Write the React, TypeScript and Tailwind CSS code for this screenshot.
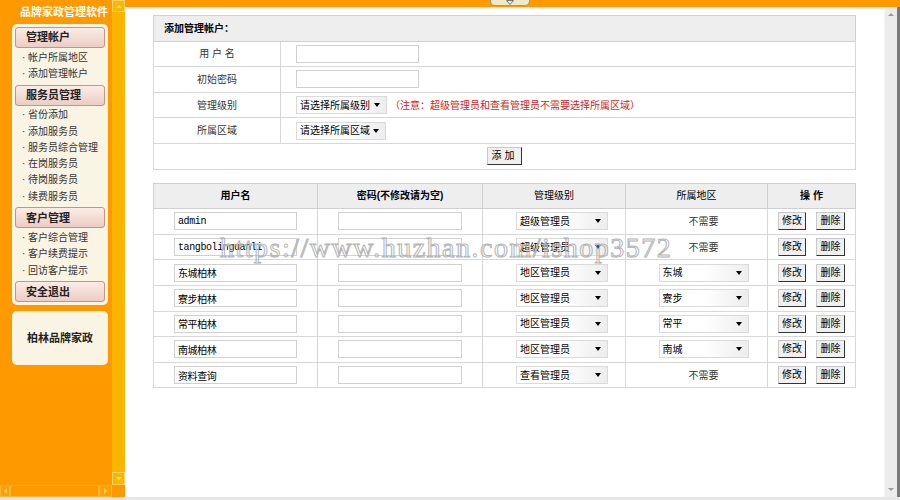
import React from 'react';

type Account = {
  name: string;
  level: string;
  area: string | null;
};

const accounts: Account[] = [
  { name: 'admin', level: '超级管理员', area: null },
  { name: 'tangbolinguanli', level: '超级管理员', area: null },
  { name: '东城柏林', level: '地区管理员', area: '东城' },
  { name: '寮步柏林', level: '地区管理员', area: '寮步' },
  { name: '常平柏林', level: '地区管理员', area: '常平' },
  { name: '南城柏林', level: '地区管理员', area: '南城' },
  { name: '资料查询', level: '查看管理员', area: null },
];

const menu = [
  { title: '管理帐户', items: ['帐户所属地区', '添加管理帐户'] },
  { title: '服务员管理', items: ['省份添加', '添加服务员', '服务员综合管理', '在岗服务员', '待岗服务员', '续费服务员'] },
  { title: '客户管理', items: ['客户综合管理', '客户续费提示', '回访客户提示'] },
];

// old style select box, drawn by hand so the arrow looks like the screenshot
const FakeSelect = ({ label, className }: { label: string; className: string }) => (
  <span
    className={`inline-flex h-[18px] items-center justify-between border border-[#dadada] bg-linear-to-r from-white via-white to-[#ededed] pl-[3px] pr-[6px] text-[10px] text-black ${className}`}
  >
    <span>{label}</span>
    <span className="h-0 w-0 border-x-[3.5px] border-t-[4px] border-x-transparent border-t-black" />
  </span>
);

const OldButton = ({ children, className }: { children: React.ReactNode; className: string }) => (
  <button
    type="button"
    className={`h-[18px] border border-[#c8c8c8] border-r-[#333] border-b-[#333] bg-[#f0f0f0] text-[10px] leading-none text-black ${className}`}
  >
    {children}
  </button>
);

const Sidebar = () => (
  <div className="flex w-[125px] flex-col">
    <div className="flex flex-1">
      <div className="flex w-[112px] flex-col bg-[#ff9900]">
        <div className="flex h-[24px] items-center pl-[20px] text-[11px] leading-none font-bold whitespace-nowrap text-white">
          品牌家政管理软件
        </div>

        <div className="ml-[12px] w-[96px] rounded-[5px] bg-[#faf4e4] px-[3px] pt-[3px] pb-[3px]">
          {menu.map((group, gi) => (
            <div key={group.title} className={gi === 0 ? '' : 'mt-[3px]'}>
              <div className="flex h-[21px] items-center rounded-[3px] border border-[#c4938a] bg-linear-to-b from-[#fbece6] to-[#ebcdc4] pl-[10px] text-[11px] font-bold text-[#222]">
                {group.title}
              </div>
              <div className="pt-[1px]">
                {group.items.map((item) => (
                  <div key={item} className="flex h-[16.3px] items-center pl-[7px] text-[10px] text-[#333]">
                    <span className="w-[6px]">·</span>
                    {item}
                  </div>
                ))}
              </div>
            </div>
          ))}
          <div className="mt-[3px] flex h-[21px] items-center rounded-[3px] border border-[#c4938a] bg-linear-to-b from-[#fbece6] to-[#ebcdc4] pl-[10px] text-[11px] font-bold text-[#222]">
            安全退出
          </div>
        </div>

        <div className="mt-[6px] ml-[12px] flex h-[54px] w-[96px] items-center justify-center rounded-[5px] bg-[#faf4e4] text-[11px] font-bold text-[#222]">
          柏林品牌家政
        </div>
      </div>

      {/* sidebar scrollbar */}
      <div className="flex w-[13px] flex-col justify-between bg-[#fbb400]">
        <div className="flex h-[12px] items-center justify-center border border-[#ffd46a] bg-[#fcb600]">
          <span className="h-0 w-0 border-x-[3px] border-b-[3px] border-x-transparent border-b-[#ffe08a]" />
        </div>
        <div className="flex h-[13px] items-center justify-center border border-[#ffd46a] bg-[#fcb600]">
          <span className="h-0 w-0 border-x-[3px] border-t-[3px] border-x-transparent border-t-[#ffe08a]" />
        </div>
      </div>
    </div>

    <div className="flex h-[12px]">
      <div className="flex w-[112px] bg-[#ff9900]">
        <div className="flex w-[10px] items-center justify-center border border-[#ffb733] bg-[#ffa200]">
          <span className="h-0 w-0 border-y-[3px] border-r-[3px] border-y-transparent border-r-[#ffd27a]" />
        </div>
        <div className="flex-1 border border-[#ffb733]" />
        <div className="flex w-[13px] items-center justify-center border border-[#ffb733] bg-[#ffa200]">
          <span className="h-0 w-0 border-y-[3px] border-l-[3px] border-y-transparent border-l-[#ffd27a]" />
        </div>
      </div>
      <div className="w-[13px] bg-[#ff9900]" />
    </div>
  </div>
);

const AddForm = () => (
  <table className="w-full border-collapse border border-[#d0d0d0] text-[10px] text-[#333]">
    <tbody>
      <tr className="h-[25.6px] bg-[#eeeeee]">
        <td colSpan={2} className="border border-[#d0d0d0] pl-[10px] font-bold text-black">
          添加管理帐户：
        </td>
      </tr>
      <tr className="h-[25.6px]">
        <td className="w-[127px] border border-[#d8d8d8] text-center whitespace-pre">用 户 名</td>
        <td className="border border-[#d8d8d8] pl-[15px]">
          <input className="block h-[18px] w-[123px] border border-[#d0d0d0] bg-white" />
        </td>
      </tr>
      <tr className="h-[25.6px]">
        <td className="border border-[#d8d8d8] text-center">初始密码</td>
        <td className="border border-[#d8d8d8] pl-[15px]">
          <input className="block h-[18px] w-[123px] border border-[#d0d0d0] bg-white" />
        </td>
      </tr>
      <tr className="h-[25.6px]">
        <td className="border border-[#d8d8d8] text-center">管理级别</td>
        <td className="border border-[#d8d8d8] pl-[15px]">
          <div className="flex items-center">
            <FakeSelect label="请选择所属级别" className="w-[91px]" />
            <span className="ml-[3px] text-[#cc1f1f]">（注意：超级管理员和查看管理员不需要选择所属区域）</span>
          </div>
        </td>
      </tr>
      <tr className="h-[25.6px]">
        <td className="border border-[#d8d8d8] text-center">所属区域</td>
        <td className="border border-[#d8d8d8] pl-[15px]">
          <FakeSelect label="请选择所属区域" className="w-[90px]" />
        </td>
      </tr>
      <tr className="h-[25.6px]">
        <td colSpan={2} className="border border-[#d8d8d8] text-center">
          <OldButton className="w-[35px] tracking-[3px]">添加</OldButton>
        </td>
      </tr>
    </tbody>
  </table>
);

const AccountTable = () => (
  <table className="mt-[13px] w-full table-fixed border-collapse border border-[#d0d0d0] text-[10px] text-[#333]">
    <colgroup>
      <col className="w-[164px]" />
      <col className="w-[165px]" />
      <col className="w-[143px]" />
      <col className="w-[142px]" />
      <col />
    </colgroup>
    <thead>
      <tr className="h-[25.6px] bg-[#eeeeee] text-black">
        <th className="border border-[#d0d0d0] font-bold">用户名</th>
        <th className="border border-[#d0d0d0] font-bold">密码(不修改请为空)</th>
        <th className="border border-[#d0d0d0] font-normal">管理级别</th>
        <th className="border border-[#d0d0d0] font-normal">所属地区</th>
        <th className="border border-[#d0d0d0] font-bold whitespace-pre">操 作</th>
      </tr>
    </thead>
    <tbody>
      {accounts.map((a) => (
        <tr key={a.name} className="h-[25.6px]">
          <td className="border border-[#d8d8d8]">
            <input
              readOnly
              value={a.name}
              className="mx-auto block h-[18px] w-[123px] border border-[#d0d0d0] bg-white pl-[3px] font-['Liberation_Mono','Noto_Sans_CJK_SC',monospace] text-[10px] tracking-[-0.4px] text-black"
            />
          </td>
          <td className="border border-[#d8d8d8]">
            <input className="mx-auto block h-[18px] w-[124px] border border-[#d0d0d0] bg-white" />
          </td>
          <td className="border border-[#d8d8d8] pl-[33px]">
            <FakeSelect label={a.level} className="w-[92px]" />
          </td>
          <td className="border border-[#d8d8d8] pl-[14px] text-center">
            {a.area ? <FakeSelect label={a.area} className="w-[90px]" /> : <span>不需要</span>}
          </td>
          <td className="border border-[#d8d8d8]">
            <div className="flex items-center justify-center gap-[10px]">
              <OldButton className="w-[28px]">修改</OldButton>
              <OldButton className="w-[29px]">删除</OldButton>
            </div>
          </td>
        </tr>
      ))}
    </tbody>
  </table>
);

export default function App() {
  return (
    <div className="relative flex h-[500px] w-[900px] flex-col overflow-hidden bg-white font-['Liberation_Sans','Noto_Sans_CJK_SC',sans-serif]">
      <div className="flex h-[497px]">
        <Sidebar />

        <div className="flex flex-1 flex-col">
          <div className="relative h-[7px] bg-[#ff9900]">
            <div className="absolute top-0 left-[365px] flex h-[6px] w-[40px] items-center justify-center rounded-b-[5px] border border-t-0 border-[#a09a78] bg-[#efe8c9]">
              <svg width="8" height="5" viewBox="0 0 8 5">
                <path d="M0.5 0.5 L7.5 0.5 L4 4.5 Z" fill="none" stroke="#777" strokeWidth="1" />
              </svg>
            </div>
          </div>

          <div className="flex flex-1">
            <div className="flex-1">
              <div className="h-[3px] bg-linear-to-b from-[#e4e4e4] to-white" />
              <div className="px-[28px] pt-[5px]">
                <AddForm />
                <AccountTable />
              </div>
            </div>

            {/* page scrollbar */}
            <div className="flex w-[13px] flex-col justify-between border-l border-[#f6f6f6] bg-[#ececec] py-[6px]">
              <span className="mx-auto h-0 w-0 border-x-[3px] border-b-[3px] border-x-transparent border-b-[#9a9a9a]" />
              <span className="mx-auto h-0 w-0 border-x-[3px] border-t-[3px] border-x-transparent border-t-[#9a9a9a]" />
            </div>
            <div className="w-[3px] bg-[#7a7a7a]" />
          </div>
        </div>
      </div>
      <div className="h-[3px] bg-[#e6e6e6]" />

      {/* watermark over the table */}
      <div className="pointer-events-none absolute top-[234px] left-[220px] font-['Liberation_Serif',serif] text-[28px] leading-[28px] tracking-[1.5px] whitespace-nowrap text-transparent [-webkit-text-stroke:1px_#b4b4b4]">
        https://www.huzhan.com/ishop3572
      </div>
    </div>
  );
}
